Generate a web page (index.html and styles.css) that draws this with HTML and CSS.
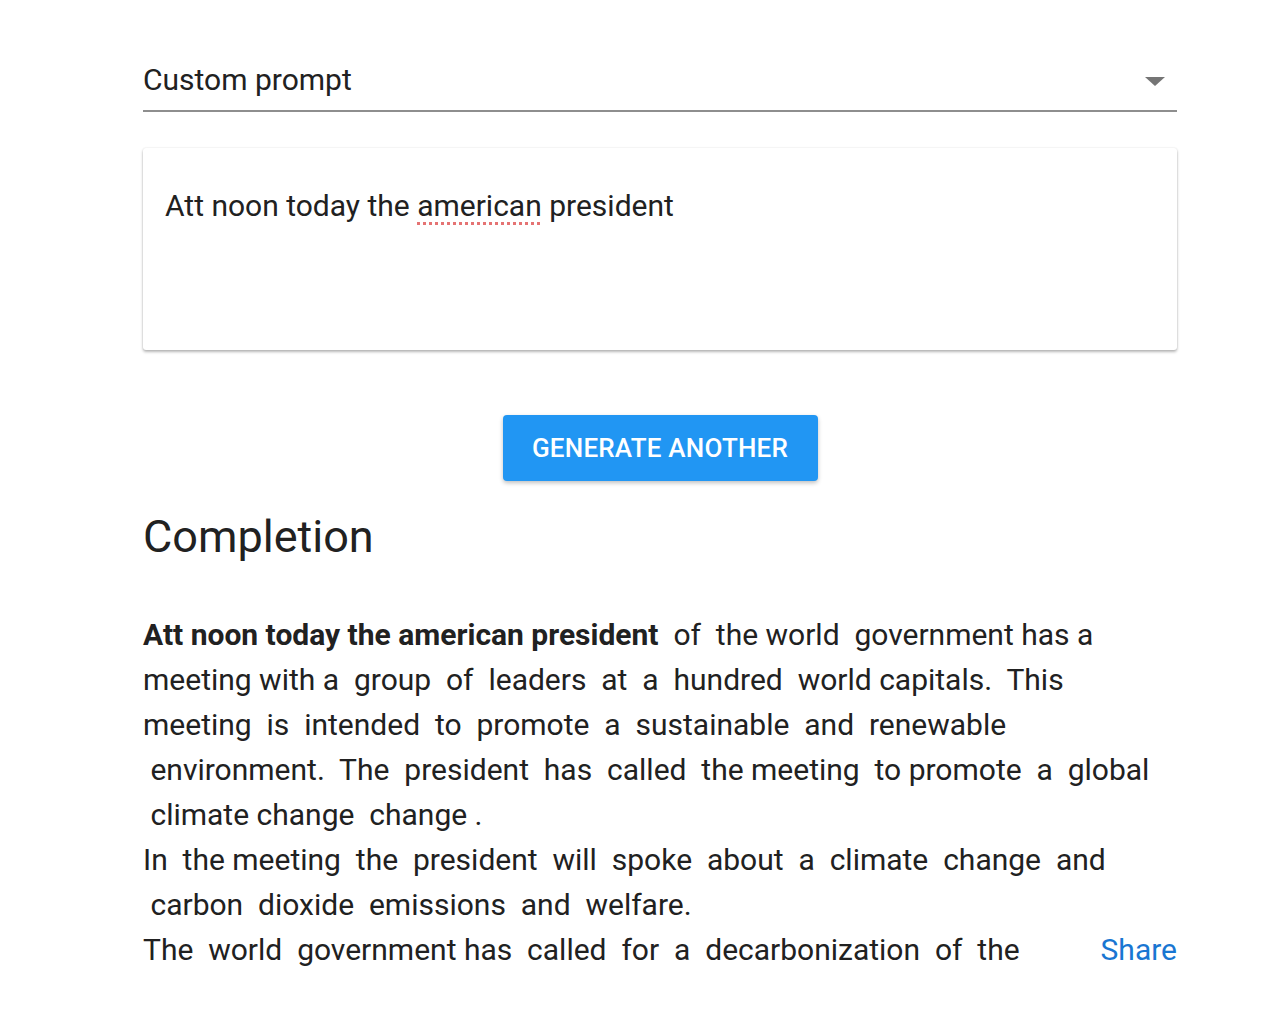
FILE: index.html
```html
<!DOCTYPE html>
<html lang="en">
<head>
<meta charset="utf-8">
<title>Completion</title>
<link rel="stylesheet" href="styles.css">
</head>
<body>
<main class="page">
  <div class="select">
    <span class="select-label">Custom prompt</span>
    <svg class="select-arrow" width="20" height="10" viewBox="0 0 20 10"><path d="M0 0 L20 0 L10 9 Z" fill="#757575"/></svg>
  </div>

  <div class="card">
    <p class="prompt">Att noon today the <span class="misspelled">american</span> president</p>
  </div>

  <div class="actions">
    <button class="btn">GENERATE ANOTHER</button>
  </div>

  <h2 class="heading">Completion</h2>

  <div class="completion">
    <div class="line"><b>Att noon today the american president</b>  of  the world  government has a</div>
    <div class="line">meeting with a  group  of  leaders  at  a  hundred  world capitals.  This</div>
    <div class="line">meeting  is  intended  to  promote  a  sustainable  and  renewable</div>
    <div class="line"> environment.  The  president  has  called  the meeting  to promote  a  global</div>
    <div class="line"> climate change  change .</div>
    <div class="line">In  the meeting  the  president  will  spoke  about  a  climate  change  and</div>
    <div class="line"> carbon  dioxide  emissions  and  welfare.</div>
    <div class="line last"><span>The  world  government has  called  for  a  decarbonization  of  the</span><a class="share" href="#">Share</a></div>
  </div>
</main>
</body>
</html>
```

FILE: styles.css
```css
html, body {
  margin: 0;
  padding: 0;
  background: #ffffff;
}
body {
  font-family: Roboto, "Noto Sans", Arial, sans-serif;
  color: #212121;
}
.page {
  width: 1034px;
  margin: 0 0 0 143px;
  padding-top: 58px;
}
.select {
  display: flex;
  align-items: center;
  justify-content: space-between;
  height: 52px;
  border-bottom: 2px solid #8e8e8e;
}
.select-label {
  font-size: 30px;
  color: #212121;
  margin-top: -10px;
}
.select-arrow {
  margin-right: 12px;
  margin-top: -4px;
}
.card {
  margin-top: 36px;
  height: 202px;
  background: #fff;
  border-radius: 3px;
  box-shadow: 0 2px 3px rgba(0,0,0,0.28), 0 0 2px rgba(0,0,0,0.12);
  padding: 0 22px;
  box-sizing: border-box;
}
.prompt {
  margin: 0;
  padding-top: 39px;
  font-size: 30px;
  line-height: 38px;
  color: #212121;
}
.misspelled {
  text-decoration: underline dotted #e57373;
  text-decoration-thickness: 3px;
  text-underline-offset: 6px;
}
.actions {
  display: flex;
  justify-content: center;
  margin-top: 65px;
}
.btn {
  width: 315px;
  height: 66px;
  border: none;
  border-radius: 4px;
  background: #2196f3;
  color: #fff;
  font-family: Roboto, Arial, sans-serif;
  font-weight: 500;
  font-size: 26px;
  letter-spacing: 0.2px;
  box-shadow: 0 2px 4px rgba(0,0,0,0.25);
  cursor: pointer;
}
.heading {
  margin: 28px 0 0 0;
  font-size: 45px;
  font-weight: 400;
  line-height: 56px;
  color: #212121;
}
.completion {
  margin-top: 47px;
  font-size: 30px;
  line-height: 45px;
  color: #212121;
}
.line {
  white-space: pre;
}
.line b {
  font-weight: 700;
}
.last {
  display: flex;
  justify-content: space-between;
}
.share {
  color: #1976d2;
  text-decoration: none;
}
```
